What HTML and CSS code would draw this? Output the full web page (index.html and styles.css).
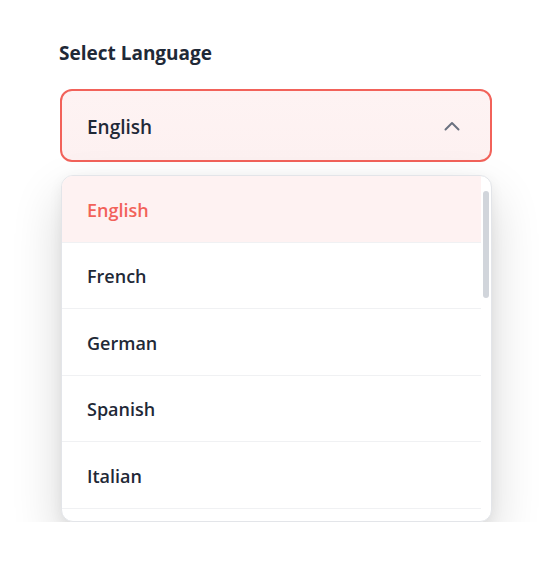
FILE: index.html
```html
<!DOCTYPE html>
<html lang="en">
<head>
    <meta charset="UTF-8">
    <meta name="viewport" content="width=device-width, initial-scale=1.0">
    <title>Select Language</title>
    <link rel="stylesheet" href="styles.css">
</head>
<body>

    <div class="container">
        <label class="field-label">Select Language</label>
        <button class="select-trigger" type="button">
            <span>English</span>
            <svg class="chevron" width="16" height="10" viewBox="0 0 16 10">
                <polyline points="1.5,8.5 8,2 14.5,8.5" fill="none" stroke="#6b7280" stroke-width="2" stroke-linecap="round" stroke-linejoin="round"/>
            </svg>
        </button>

        <div class="dropdown">
            <ul class="options">
                <li class="option selected">English</li>
                <li class="option">French</li>
                <li class="option">German</li>
                <li class="option">Spanish</li>
                <li class="option">Italian</li>
            </ul>
            <div class="scroll-thumb"></div>
        </div>
    </div>

</body>
</html>
```

FILE: styles.css
```css
body {
    font-family: 'Open Sans', 'Noto Sans', sans-serif;
    background-color: #fff;
    color: #1f2937;
    margin: 0;
}

.container {
    width: 432px;
    padding: 40px 0 0 60px;
}

.field-label {
    display: block;
    font-size: 19px;
    font-weight: 700;
    line-height: 27px;
    margin-left: -1px;
    margin-bottom: 22px;
}

.select-trigger {
    display: flex;
    align-items: center;
    justify-content: space-between;
    width: 100%;
    height: 73px;
    padding: 2px 30px 0 25px;
    background: linear-gradient(to bottom, #fef3f3, #fdf1f1);
    border: 2px solid #f2625a;
    border-radius: 12px;
    font-family: inherit;
    font-size: 19px;
    font-weight: 600;
    color: #1f2937;
    box-sizing: border-box;
    cursor: pointer;
}

.chevron {
    margin-top: -2px;
}

.dropdown {
    position: relative;
    margin: 13px 0 0 1px;
    height: 345px;
    overflow: hidden;
    background: #fff;
    border: 1px solid #e3e5e9;
    border-radius: 12px;
    box-shadow: 0 22px 50px rgba(0, 0, 0, 0.16), 0 4px 14px rgba(0, 0, 0, 0.06);
}

.options {
    list-style: none;
    margin: 0;
    padding: 0 10px 0 0;
}

.option {
    padding: 21.5px 25px 19px;
    line-height: 25px;
    font-size: 18px;
    font-weight: 600;
    border-bottom: 1px solid #f0f1f3;
}

.option.selected {
    background-color: #fef2f2;
    color: #f2625a;
}

.scroll-thumb {
    position: absolute;
    top: 15px;
    right: 2px;
    width: 6px;
    height: 107px;
    border-radius: 3px;
    background-color: #d1d5db;
}
```
